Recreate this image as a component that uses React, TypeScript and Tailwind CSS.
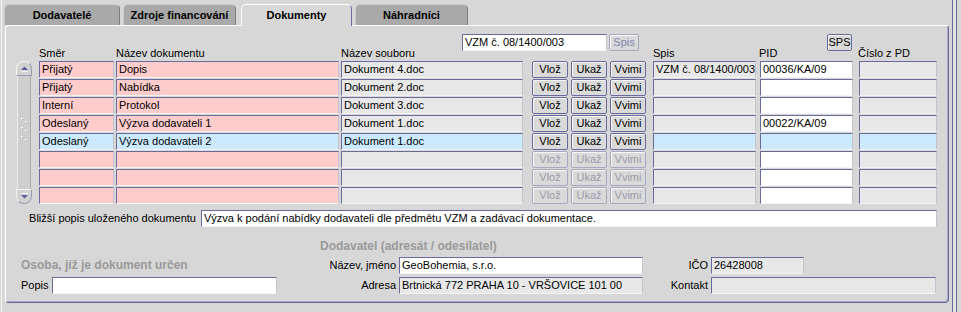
import React from 'react';

type Tone = 'pink' | 'blue' | 'gray' | 'white';
const TONE: Record<Tone, string> = {
  pink: 'bg-[#ffcccc]',
  blue: 'bg-[#cceaff]',
  gray: 'bg-[#e8e8e8]',
  white: 'bg-white',
};

function Field({ w, tone, text, className = '' }: { w: string; tone: Tone; text?: string; className?: string }) {
  return (
    <div
      className={`${w} ${TONE[tone]} ${className} h-[17px] shrink-0 border border-t-[#6b6b9b] border-l-[#6b6b9b] border-r-[#c4c4d0] border-b-[#f4f4f4] pl-[2px] text-[11px] leading-[15px] text-black whitespace-nowrap overflow-hidden`}
    >
      {text}
    </div>
  );
}

function Btn({ w, label, disabled = false, className = '' }: { w: string; label: string; disabled?: boolean; className?: string }) {
  return (
    <button
      type="button"
      className={`${w} ${className} ${
        disabled ? 'border-[#a8a8c0] text-[#9c9cac]' : 'border-[#6b6b9b] text-black'
      } h-[17px] shrink-0 rounded-[2px] border bg-[#dadada] shadow-[inset_1px_1px_0_#f6f6f6] text-[11px] leading-[15px] text-center p-0`}
    >
      {label}
    </button>
  );
}

function Tab({ w, ml = '', label, active = false }: { w: string; ml?: string; label: string; active?: boolean }) {
  return (
    <div
      className={`${w} ${ml} ${
        active
          ? 'h-[22px] bg-[#d7d7d7] border-t-white border-l-white border-r-[#6b6b9b]'
          : 'h-[21px] bg-[#a9a9a9] border-t-[#cdcdcd] border-l-[#cdcdcd] border-r-[#7c7c7c]'
      } shrink-0 rounded-t-[5px] border border-b-0 text-center font-bold text-[11px] leading-[20px] text-black`}
    >
      {label}
    </div>
  );
}

type Row = {
  smer: string;
  nazev: string;
  soubor: string;
  spis: string;
  pid: string;
  current?: boolean;
  enabled: boolean;
};

const rows: Row[] = [
  { smer: 'Přijatý', nazev: 'Dopis', soubor: 'Dokument 4.doc', spis: 'VZM č. 08/1400/003', pid: '00036/KA/09', enabled: true },
  { smer: 'Přijatý', nazev: 'Nabídka', soubor: 'Dokument 2.doc', spis: '', pid: '', enabled: true },
  { smer: 'Interní', nazev: 'Protokol', soubor: 'Dokument 3.doc', spis: '', pid: '', enabled: true },
  { smer: 'Odeslaný', nazev: 'Výzva dodavateli 1', soubor: 'Dokument 1.doc', spis: '', pid: '00022/KA/09', enabled: true },
  { smer: 'Odeslaný', nazev: 'Výzva dodavateli 2', soubor: 'Dokument 1.doc', spis: '', pid: '', current: true, enabled: true },
  { smer: '', nazev: '', soubor: '', spis: '', pid: '', enabled: false },
  { smer: '', nazev: '', soubor: '', spis: '', pid: '', enabled: false },
  { smer: '', nazev: '', soubor: '', spis: '', pid: '', enabled: false },
];

function DocRow({ r }: { r: Row }) {
  const c = r.current;
  return (
    <div className="flex">
      <Field w="w-[75px]" tone={c ? 'blue' : 'pink'} text={r.smer} />
      <Field w="w-[223px]" className="ml-[2px]" tone={c ? 'blue' : 'pink'} text={r.nazev} />
      <Field w="w-[182px]" className="ml-[2px]" tone={c ? 'blue' : 'gray'} text={r.soubor} />
      <Btn w="w-[36px]" className="ml-[9px]" label="Vlož" disabled={!r.enabled} />
      <Btn w="w-[36px]" className="ml-[3px]" label="Ukaž" disabled={!r.enabled} />
      <Btn w="w-[36px]" className="ml-[3px]" label="Vvimi" disabled={!r.enabled} />
      <Field w="w-[103px]" className="ml-[7px]" tone={c ? 'blue' : 'gray'} text={r.spis} />
      <Field w="w-[93px]" className="ml-[4px]" tone={c ? 'blue' : 'white'} text={r.pid} />
      <Field w="w-[78px]" className="ml-[6px]" tone={c ? 'blue' : 'gray'} />
    </div>
  );
}

function Scrollbar() {
  return (
    <div className="w-[16px] h-[143px] shrink-0 flex flex-col">
      <div className="h-[15px] rounded-t-[8px] border border-t-[#f4f4f4] border-l-[#f4f4f4] border-r-[#9a9ab4] border-b-[#9a9ab4] bg-[#d2d2d2] flex items-center justify-center">
        <svg width="9" height="7" viewBox="0 0 9 7">
          <path d="M1 5 L4.5 1.5 L8 5 Z" fill="#5d5d9d" />
          <path d="M1 6.5 H8" stroke="#f4f4f4" strokeWidth="1" />
        </svg>
      </div>
      <div className="flex-1 mx-[1px] bg-[#cecece] border-l border-l-[#ececec] border-r border-r-[#ababab] flex flex-col items-center pt-[40px]">
        <svg width="10" height="28" viewBox="0 0 10 28">
          {[0, 1, 2].map((i) => (
            <g key={i}>
              <rect x="2" y={2 + i * 9} width="2" height="2" fill="#f8f8f8" />
              <rect x="6" y={5 + i * 9} width="2" height="2" fill="#f8f8f8" />
              <rect x="3" y={3 + i * 9} width="1" height="1" fill="#9a9a9a" />
              <rect x="7" y={6 + i * 9} width="1" height="1" fill="#9a9a9a" />
            </g>
          ))}
        </svg>
      </div>
      <div className="h-[15px] rounded-b-[8px] border border-t-[#f4f4f4] border-l-[#f4f4f4] border-r-[#9a9ab4] border-b-[#9a9ab4] bg-[#d2d2d2] flex items-center justify-center">
        <svg width="9" height="7" viewBox="0 0 9 7">
          <path d="M1 0.5 H8" stroke="#f4f4f4" strokeWidth="1" />
          <path d="M1 2 L4.5 5.5 L8 2 Z" fill="#5d5d9d" />
        </svg>
      </div>
    </div>
  );
}

export default function App() {
  return (
    <div className="w-[961px] h-[312px] bg-[#d7d7d7] flex overflow-hidden font-['Liberation_Sans',Arial,sans-serif] text-[11px] text-black">
      <div className="w-[949px] h-full shrink-0 ml-[1px] border-l border-l-[#f4f4f4] pl-[3px] pt-[4px] flex flex-col">
        {/* tabs */}
        <div className="flex items-start h-[22px] -mb-px -ml-[1px] relative z-10">
          <Tab w="w-[116px]" label="Dodavatelé" />
          <Tab w="w-[113px]" ml="ml-[3px]" label="Zdroje financování" />
          <Tab w="w-[111px]" ml="ml-[5px]" label="Dokumenty" active />
          <Tab w="w-[113px]" ml="ml-[3px]" label="Náhradníci" />
        </div>

        {/* panel */}
        <div className="w-[944px] bg-[#d7d7d7] border border-t-white border-l-white border-r-[#6b6b9b] border-b-[#6b6b9b] rounded-tl-[3px] rounded-tr-[3px] rounded-b-[4px] shadow-[inset_-1px_-1px_0_#a8a8c4] pt-[8px] pb-[8px]">
          {/* header */}
          <div className="flex h-[26px] pl-[33px]">
            <div className="w-[77px] h-[13px] leading-[13px] self-end shrink-0">Směr</div>
            <div className="w-[225px] h-[13px] leading-[13px] self-end shrink-0">Název dokumentu</div>
            <div className="w-[121px] h-[13px] leading-[13px] self-end shrink-0">Název souboru</div>
            <Field w="w-[145px]" tone="white" text="VZM č. 08/1400/003" className="self-start" />
            <Btn w="w-[30px]" className="ml-[2px] self-start !text-[#8484b0]" label="Spis" disabled />
            <div className="ml-[14px] w-[106px] h-[13px] leading-[13px] self-end shrink-0">Spis</div>
            <div className="w-[68px] h-[13px] leading-[13px] self-end shrink-0">PID</div>
            <Btn w="w-[25px]" className="self-start" label="SPS" />
            <div className="ml-[6px] h-[13px] leading-[13px] self-end shrink-0">Číslo z PD</div>
          </div>

          {/* rows */}
          <div className="flex mt-[1px] pl-[10px]">
            <Scrollbar />
            <div className="ml-[7px] flex flex-col gap-[1px]">
              {rows.map((r, i) => (
                <DocRow key={i} r={r} />
              ))}
            </div>
          </div>

          {/* description */}
          <div className="flex items-center mt-[6px]">
            <div className="w-[190px] text-right shrink-0">Bližší popis uloženého dokumentu</div>
            <Field
              w="w-[736px]"
              className="ml-[5px]"
              tone="white"
              text="Výzva k podání nabídky dodavateli dle předmětu VZM a zadávací dokumentace."
            />
          </div>

          <div className="mt-[13px] h-[13px] pl-[314px] font-bold text-[12px] leading-[13px] text-[#9a9a9a] whitespace-nowrap">
            Dodavatel (adresát / odesílatel)
          </div>

          <div className="flex items-center mt-[3px] pl-[15px]">
            <div className="w-[299px] shrink-0 font-bold text-[12px] text-[#9a9a9a] whitespace-nowrap">Osoba, jíž je dokument určen</div>
            <div className="w-[76px] shrink-0 text-right whitespace-nowrap">Název, jméno</div>
            <Field w="w-[244px]" className="ml-[3px]" tone="white" text="GeoBohemia, s.r.o." />
            <div className="w-[65px] shrink-0 text-right">IČO</div>
            <Field w="w-[93px]" className="ml-[3px]" tone="gray" text="26428008" />
          </div>

          <div className="flex items-center mt-[3px] pl-[15px]">
            <div className="w-[28px] shrink-0">Popis</div>
            <Field w="w-[225px]" className="ml-[3px]" tone="white" />
            <div className="w-[119px] shrink-0 text-right">Adresa</div>
            <Field w="w-[244px]" className="ml-[3px]" tone="gray" text="Brtnická 772 PRAHA 10 - VRŠOVICE 101 00" />
            <div className="w-[65px] shrink-0 text-right">Kontakt</div>
            <Field w="w-[225px]" className="ml-[3px]" tone="gray" />
          </div>
        </div>
      </div>

      {/* right window frame */}
      <div className="flex h-full shrink-0">
        <div className="w-[2px]" />
        <div className="w-[1px] bg-[#6b6b9b]" />
        <div className="w-[3px] bg-[#e2e2e2]" />
        <div className="w-[1px] bg-[#6b6b9b]" />
      </div>
    </div>
  );
}
